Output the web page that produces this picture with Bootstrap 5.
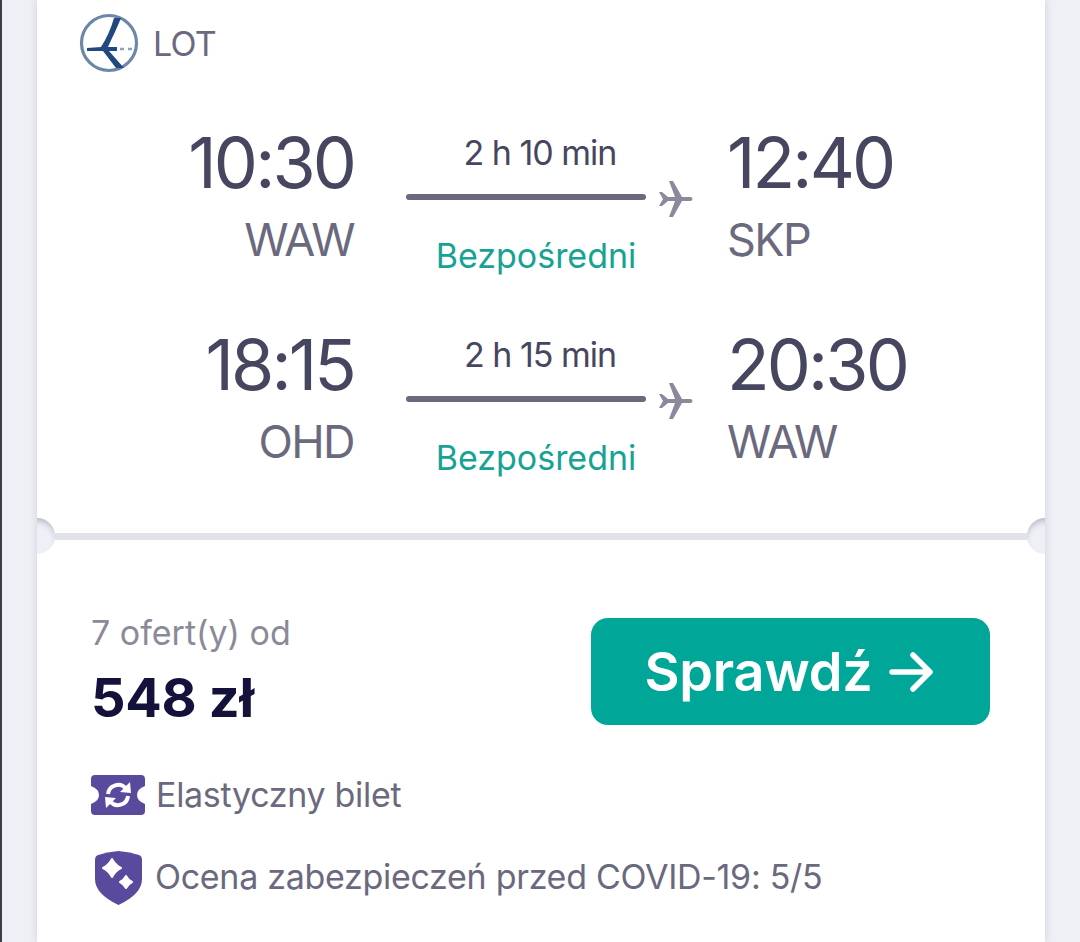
<!doctype html>
<html lang="pl">

<head>
  <meta charset="utf-8">
  <meta name="viewport" content="width=device-width, initial-scale=1">
  <title>Oferta lotu</title>
  <link href="https://cdn.jsdelivr.net/npm/bootstrap@5.3.5/dist/css/bootstrap.min.css" rel="stylesheet">

  <style>
    html, body { height: 942px; overflow: hidden; }
    body {
      font-family: Inter, "Liberation Sans", sans-serif;
      background: #eff0f6;
      border-left: 2px solid #3c3c4a;
      color: #6a697e;
    }
    .deal-card {
      width: 1008px;
      height: 942px;
      margin-left: 35px;
      background: #fff;
      position: relative;
      box-shadow: 0 0 8px rgba(60, 60, 90, .18);
    }
    .top-part { height: 533px; }
    .rule { height: 7px; margin: 0 18px; background: #e2e2e9; }
    .notch {
      position: absolute;
      top: 518px;
      width: 36px;
      height: 36px;
      border-radius: 50%;
      background: #eff0f6;
      box-shadow: inset 0 5px 6px -2px rgba(60, 60, 90, .3);
    }
    .notch-l { left: -18px; clip-path: inset(0 0 0 18px); }
    .notch-r { right: -18px; clip-path: inset(0 18px 0 0); }
    .carrier { padding: 13px 0 0 42px; height: 73px; gap: 14px; font-size: 34px; letter-spacing: -.8px; }
    .leg { height: 202px; }
    .side-l { width: 317px; }
    .side-m { width: 288px; margin-left: 52px; }
    .side-r { margin-left: 33px; }
    .clock { font-size: 70px; line-height: 70px; padding-top: 55px; color: #474660; letter-spacing: -2.9px; }
    .code { font-size: 45px; line-height: 50px; margin-top: 17px; letter-spacing: -1.6px; }
    .span-time { font-size: 34px; line-height: 40px; padding-top: 60px; height: 100px; width: 268px; color: #474660; letter-spacing: -1px; }
    .track { margin-top: 5px; height: 38px; }
    .track-line { width: 240px; height: 6px; background: #6a697e; border-radius: 3px; }
    .plane-ico { margin-top: 4px; margin-left: 4px; }
    .direct { font-size: 34px; line-height: 40px; color: #16a394; margin-top: 20px; width: 260px; letter-spacing: 0; }
    .bottom-part { padding: 73px 55px 0 54px; }
    .from-text { font-size: 34px; line-height: 40px; color: #8b8a99; letter-spacing: 0; }
    .price { font-size: 54px; line-height: 60px; font-weight: 700; color: #14123a; margin-top: 15px; letter-spacing: -.3px; }
    .go-btn {
      width: 399px;
      height: 107px;
      margin-top: 5px;
      padding: 0 4px 0 0;
      border-radius: 17px;
      background: #00a698;
      color: #fff;
      font-size: 54px;
      font-weight: 600;
      letter-spacing: -.2px;
      gap: 16px;
      border: 0;
    }
    .go-btn:hover { background: #00a698; color: #fff; }
    .perk { font-size: 34px; line-height: 40px; letter-spacing: -.3px; gap: 11px; }
    .perk-one { margin-top: 47px; }
    .perk-two { margin-top: 36px; }
    .perk-two span { margin-left: 2px; margin-bottom: 3px; }
  </style>
</head>

<body>

  <div class="deal-card">
    <span class="notch notch-l"></span>
    <span class="notch notch-r"></span>

    <div class="top-part">
      <div class="carrier d-flex align-items-center">
        <svg width="60" height="60" viewBox="0 0 60 60" fill="none">
          <circle cx="30" cy="30" r="27.5" stroke="#6d87a8" stroke-width="3.2"/>
          <path d="M42 5 L35 5 C32 16 27 26 22 34 L8 35 L8 38 L24 38 L37 55 L45 55 L30 38 L38 38 L38 34 L29 34 C33 25 38 15 42 5 Z" fill="#21497f"/>
          <path d="M41 36 H54" stroke="#8ea2bd" stroke-width="2.4" stroke-dasharray="4 4"/>
        </svg>
        <span>LOT</span>
      </div>

      <div class="leg d-flex">
        <div class="side-l text-end">
          <div class="clock">10:30</div>
          <div class="code">WAW</div>
        </div>
        <div class="side-m">
          <div class="span-time text-center">2 h 10 min</div>
          <div class="track d-flex align-items-center gap-2">
            <div class="track-line"></div>
            <svg class="plane-ico" width="36" height="36" viewBox="0 0 36 36" fill="#8c899c">
              <path d="M1 11 L5 18 L1 25 L4 25 L10 20 L17 20 L11 36 L15 36 L24 20 L33 20 Q36 18 33 16 L24 16 L15 0 L11 0 L17 16 L10 16 L4 11 Z"/>
            </svg>
          </div>
          <div class="direct text-center">Bezpośredni</div>
        </div>
        <div class="side-r">
          <div class="clock">12:40</div>
          <div class="code">SKP</div>
        </div>
      </div>

      <div class="leg d-flex">
        <div class="side-l text-end">
          <div class="clock">18:15</div>
          <div class="code">OHD</div>
        </div>
        <div class="side-m">
          <div class="span-time text-center">2 h 15 min</div>
          <div class="track d-flex align-items-center gap-2">
            <div class="track-line"></div>
            <svg class="plane-ico" width="36" height="36" viewBox="0 0 36 36" fill="#8c899c">
              <path d="M1 11 L5 18 L1 25 L4 25 L10 20 L17 20 L11 36 L15 36 L24 20 L33 20 Q36 18 33 16 L24 16 L15 0 L11 0 L17 16 L10 16 L4 11 Z"/>
            </svg>
          </div>
          <div class="direct text-center">Bezpośredni</div>
        </div>
        <div class="side-r">
          <div class="clock">20:30</div>
          <div class="code">WAW</div>
        </div>
      </div>
    </div>

    <div class="rule"></div>

    <div class="bottom-part">
      <div class="d-flex justify-content-between align-items-start">
        <div>
          <div class="from-text">7 ofert(y) od</div>
          <div class="price">548 zł</div>
        </div>
        <a class="go-btn btn d-flex align-items-center justify-content-center" href="#">
          <span>Sprawdź</span>
          <svg width="44" height="40" viewBox="0 0 44 40" fill="none" stroke="#fff" stroke-width="5.5" stroke-linecap="round" stroke-linejoin="round">
            <path d="M3 20 H41 M24 3 L41 20 L24 37"/>
          </svg>
        </a>
      </div>

      <div class="perk perk-one d-flex align-items-center">
        <svg width="54" height="40" viewBox="0 0 54 40">
          <path fill="#5a4a9e" d="M4 0 H50 Q54 0 54 4 V11 Q46 14 46 20 Q46 26 54 29 V36 Q54 40 50 40 H4 Q0 40 0 36 V29 Q8 26 8 20 Q8 14 0 11 V4 Q0 0 4 0 Z"/>
          <path fill="none" stroke="#fff" stroke-width="4" d="M17 19 A10 10 0 0 1 35 14 M37 21 A10 10 0 0 1 19 26"/>
          <path fill="#fff" d="M29 17 L40 18 L39 7 Z M25 23 L14 22 L15 33 Z"/>
        </svg>
        <span>Elastyczny bilet</span>
      </div>

      <div class="perk perk-two d-flex align-items-center">
        <svg class="ms-1" width="47" height="54" viewBox="0 0 47 54">
          <path fill="#5a4a9e" d="M23.5 0 Q35 1 44 4 Q47 5 47 9 V28 Q47 43 23.5 54 Q0 43 0 28 V9 Q0 5 3 4 Q12 1 23.5 0 Z"/>
          <path fill="#fff" stroke="#fff" stroke-width="2" stroke-linejoin="round" d="M17 8 Q20 14 26 17 Q20 20 17 26 Q14 20 8 17 Q14 14 17 8 Z M31 25 Q33 29 37 31 Q33 33 31 37 Q29 33 25 31 Q29 29 31 25 Z"/>
        </svg>
        <span>Ocena zabezpieczeń przed COVID-19: 5/5</span>
      </div>
    </div>
  </div>

  <script src="https://cdn.jsdelivr.net/npm/bootstrap@5.3.5/dist/js/bootstrap.bundle.min.js"></script>

</body>

</html>
